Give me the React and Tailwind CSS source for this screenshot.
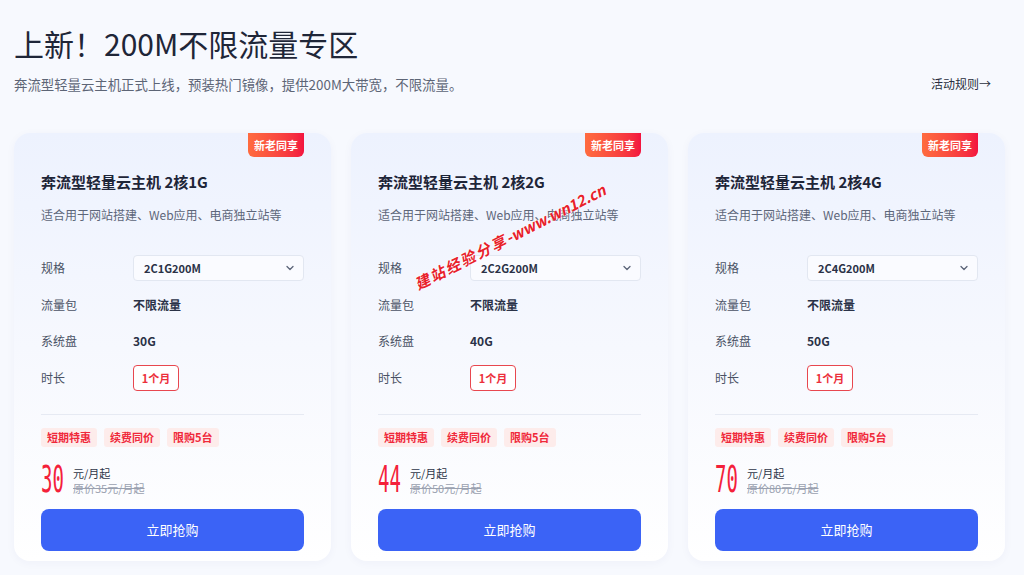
import React from 'react';

const plans = [
    { name: '奔流型轻量云主机 2核1G', spec: '2C1G200M', disk: '30G', price: '30', origin: '35' },
    { name: '奔流型轻量云主机 2核2G', spec: '2C2G200M', disk: '40G', price: '44', origin: '50' },
    { name: '奔流型轻量云主机 2核4G', spec: '2C4G200M', disk: '50G', price: '70', origin: '80' },
];

const tags = ['短期特惠', '续费同价', '限购5台'];

function Chevron() {
    return (
        <svg width="10" height="10" viewBox="0 0 10 10" fill="none" stroke="#5b6478" strokeWidth="1.3" strokeLinecap="round" strokeLinejoin="round">
            <path d="M2 3.5 L5 6.5 L8 3.5" />
        </svg>
    );
}

function PlanCard({ plan }) {
    return (
        <div className="relative h-[428px] rounded-2xl bg-gradient-to-b from-[#edf2fe] via-[#f6f8fe] to-white px-[27px] pt-[37px] shadow-[0_2px_10px_rgba(40,60,120,0.04)]">
            {/* corner badge */}
            <div className="absolute top-0 right-[27px] flex h-[24px] w-[56px] items-center justify-center rounded-b-md bg-gradient-to-r from-[#ff6b3f] to-[#f3133f] text-[11px] font-bold text-white">
                新老同享
            </div>

            <h3 className="text-[15px] leading-[24px] font-bold text-[#1e2538]">{plan.name}</h3>
            <p className="mt-[12px] text-[12px] leading-[18px] text-[#5d6679]">适合用于网站搭建、Web应用、电商独立站等</p>

            <div className="mt-[31px] flex h-[26px] items-center text-[12px]">
                <span className="w-[92px] text-[#4a5265]">规格</span>
                <div className="flex h-[26px] flex-1 items-center justify-between rounded-sm border border-[#e2e7f1] bg-[#fafbff] pl-[10px] pr-[8px]">
                    <span className="text-[11px] font-bold text-[#2a3247]">{plan.spec}</span>
                    <Chevron />
                </div>
            </div>
            <div className="mt-[11px] flex h-[26px] items-center text-[12px]">
                <span className="w-[92px] text-[#4a5265]">流量包</span>
                <span className="font-bold text-[#2a3247]">不限流量</span>
            </div>
            <div className="mt-[10px] flex h-[26px] items-center text-[12px]">
                <span className="w-[92px] text-[#4a5265]">系统盘</span>
                <span className="font-bold text-[#2a3247]">{plan.disk}</span>
            </div>
            <div className="mt-[11px] flex h-[26px] items-center text-[12px]">
                <span className="w-[92px] text-[#4a5265]">时长</span>
                <span className="flex h-[26px] w-[46px] items-center justify-center rounded-sm border border-[#e8474f] bg-white text-[11px] font-bold text-[#ec2f3b]">1个月</span>
            </div>

            <div className="mt-[23px] h-px bg-[#e6eaf3]" />

            <div className="mt-[13px] flex gap-[7px]">
                {tags.map(t => (
                    <span key={t} className="flex h-[19px] items-center rounded-[3px] bg-[#fdeceb] px-[6px] text-[11px] font-bold text-[#f0283a]">{t}</span>
                ))}
            </div>

            <div className="mt-[20px] flex h-[28px] items-center">
                <div className="w-[32px] overflow-visible">
                    <span className="inline-block origin-left scale-x-[0.5] font-['DejaVu_Sans_Mono',monospace] text-[38px] leading-[28px] text-[#f4213a]">{plan.price}</span>
                </div>
                <div className="flex flex-col text-[11px] leading-[15px]">
                    <span className="text-[#2e3548]">元/月起</span>
                    <span className="text-[#9aa1b0] line-through">原价{plan.origin}元/月起</span>
                </div>
            </div>

            <button className="mt-[14px] flex h-[42px] w-full items-center justify-center rounded-lg bg-[#3b63f6] text-[13px] text-white">
                立即抢购
            </button>
        </div>
    );
}

export default function App() {
    return (
        <div className="relative min-h-[575px] overflow-hidden bg-[#f7f9fe] pl-[14px] pr-[19px] pt-[23px] font-['Noto_Sans_CJK_SC','Noto_Sans',sans-serif]">
            <h1 className="text-[30px] leading-[40px] text-[#1f2638]">上新！200M不限流量专区</h1>
            <div className="mt-[11px] flex items-center justify-between">
                <p className="text-[13.4px] leading-[20px] text-[#5d6576]">奔流型轻量云主机正式上线，预装热门镜像，提供200M大带宽，不限流量。</p>
                <a className="mr-[14px] text-[12px] text-[#2a3040]">活动规则→</a>
            </div>

            <div className="mt-[39px] grid grid-cols-3 gap-[20px]">
                {plans.map(p => <PlanCard key={p.spec} plan={p} />)}
            </div>

            {/* site watermark */}
            <div className="pointer-events-none absolute left-[510px] top-[237px] -translate-x-1/2 -translate-y-1/2 -rotate-[27deg] whitespace-nowrap text-[15px] font-bold italic text-[#e8202a] [text-shadow:0_0_2px_#fff,0_0_2px_#fff]">
                <span className="tracking-[2px]">建站经验分享</span>-www.wn12.cn
            </div>
        </div>
    );
}
